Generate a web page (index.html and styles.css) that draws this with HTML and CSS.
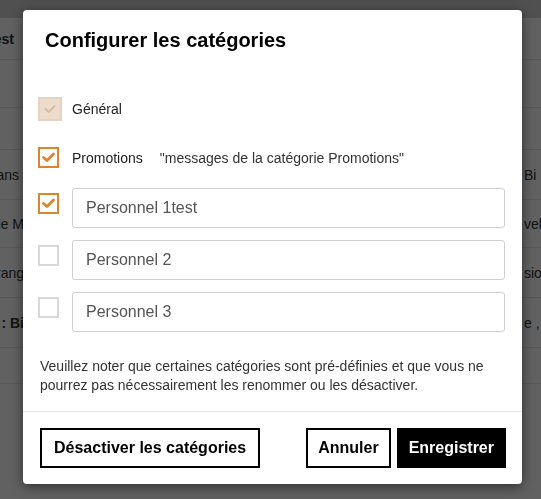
FILE: index.html
```html
<!DOCTYPE html>
<html lang="fr">
<head>
<meta charset="utf-8">
<title>Configurer les catégories</title>
<link rel="stylesheet" href="styles.css">
</head>
<body>
<div class="page">
  <div class="topbar"></div>
  <div class="row row-head"><div class="cell-left cell-head"><b>Test</b></div><div class="cell-mid"></div><div class="cell-right"></div></div>
  <div class="row row-48"><div class="cell-left"></div><div class="cell-mid"></div><div class="cell-right"></div></div>
  <div class="row row-42"><div class="cell-left"></div><div class="cell-mid"></div><div class="cell-right"></div></div>
  <div class="row row-50"><div class="cell-left">Dans</div><div class="cell-mid"></div><div class="cell-right">Bi</div></div>
  <div class="row row-48"><div class="cell-left cell-wide">de M</div><div class="cell-mid"></div><div class="cell-right">vel</div></div>
  <div class="row row-50"><div class="cell-left cell-wide">Orang</div><div class="cell-mid"></div><div class="cell-right">sion</div></div>
  <div class="row row-50"><div class="cell-left cell-wide"><b>: Bi</b></div><div class="cell-mid"></div><div class="cell-right">e , <span class="red">c</span></div></div>
  <div class="row row-36"><div class="cell-left"></div><div class="cell-mid"></div><div class="cell-right"></div></div>
</div>
<div class="overlay"></div>

<div class="modal" role="dialog" aria-labelledby="modal-title">
  <div class="modal-header">
    <h2 id="modal-title" class="modal-title">Configurer les catégories</h2>
  </div>
  <div class="modal-body">
    <div class="cat-row cat-text">
      <span class="check check-disabled"><svg viewBox="0 0 24 24" class="tick"><path d="M6.5 12 L10.5 15.5 L17.5 8.5"/></svg></span>
      <span class="cat-label">Général</span>
    </div>
    <div class="cat-row cat-text">
      <span class="check check-on"><svg viewBox="0 0 17 17" class="tick"><path d="M3.5 8.5 L7 11.5 L13.5 5"/></svg></span>
      <span class="cat-label">Promotions</span>
      <span class="cat-desc">"messages de la catégorie Promotions"</span>
    </div>
    <div class="cat-row cat-input">
      <span class="check check-on"><svg viewBox="0 0 17 17" class="tick"><path d="M3.5 8.5 L7 11.5 L13.5 5"/></svg></span>
      <input class="cat-field" type="text" value="Personnel 1test">
    </div>
    <div class="cat-row cat-input">
      <span class="check check-off"></span>
      <input class="cat-field" type="text" value="Personnel 2">
    </div>
    <div class="cat-row cat-input">
      <span class="check check-off"></span>
      <input class="cat-field" type="text" value="Personnel 3">
    </div>
    <p class="note">Veuillez noter que certaines catégories sont pré-définies et que vous ne pourrez pas nécessairement les renommer ou les désactiver.</p>
  </div>
  <div class="modal-footer">
    <button class="btn btn-outline btn-wide">Désactiver les catégories</button>
    <div class="footer-right">
      <button class="btn btn-outline">Annuler</button>
      <button class="btn btn-primary">Enregistrer</button>
    </div>
  </div>
</div>
</body>
</html>
```

FILE: styles.css
```css
* { box-sizing: border-box; }

html, body {
  margin: 0;
  padding: 0;
  width: 541px;
  height: 499px;
  overflow: hidden;
  font-family: "Liberation Sans", Arial, sans-serif;
}

/* background page */
.page {
  background: #ffffff;
  height: 499px;
  color: #333;
  font-size: 14px;
}
.topbar {
  height: 18px;
  background: #d2d2d2;
}
.row {
  display: flex;
  align-items: center;
  border-bottom: 1px solid #e4e4e4;
}
.row-head { height: 42px; }
.row-48 { height: 48px; }
.row-42 { height: 42px; }
.row-50 { height: 50px; }
.row-36 { height: 36px; }
.cell-left {
  width: 19px;
  display: flex;
  justify-content: flex-end;
  overflow: hidden;
  white-space: nowrap;
}
.cell-head { width: 14px; }
.cell-wide { width: 24px; }
.cell-mid { flex: 1; }
.cell-right {
  width: 17px;
  overflow: hidden;
  white-space: nowrap;
}
.red { color: #c0392b; }

.overlay {
  position: fixed;
  inset: 0;
  background: rgba(0, 0, 0, 0.62);
}

/* modal */
.modal {
  position: absolute;
  left: 23px;
  top: 10px;
  width: 499px;
  background: #fff;
  border-radius: 4px;
  box-shadow: 0 3px 12px rgba(0, 0, 0, 0.5);
  color: #222;
}
.modal-header {
  padding: 18px 22px 0;
}
.modal-title {
  margin: 0;
  font-size: 20px;
  line-height: 24px;
  font-weight: bold;
  color: #000;
}
.modal-body {
  padding: 38px 17px 16px 15px;
  display: flex;
  flex-direction: column;
  gap: 12px;
}
.cat-row {
  display: flex;
}
.cat-text {
  height: 37px;
  align-items: center;
}
.cat-input {
  height: 40px;
  align-items: flex-start;
}
.cat-input .check { margin-top: 5px; }

.check {
  width: 21px;
  height: 21px;
  margin-right: 13px;
  flex: none;
  display: flex;
  align-items: center;
  justify-content: center;
  border: 2px solid #d8d8d8;
  background: #fff;
}
.check-on {
  border-color: #e0832c;
}
.check-on .tick {
  width: 17px;
  height: 17px;
  fill: none;
  stroke: #e0832c;
  stroke-width: 2.8;
  stroke-linecap: round;
  stroke-linejoin: round;
}
.check-disabled {
  width: 24px;
  height: 24px;
  margin-right: 10px;
  background: #ecdccd;
  border-color: #e6d2bf;
}
.check-disabled .tick {
  width: 22px;
  height: 22px;
  fill: none;
  stroke: #dcb999;
  stroke-width: 2.4;
  stroke-linecap: round;
  stroke-linejoin: round;
}
.cat-label {
  font-size: 14px;
  color: #222;
}
.cat-desc {
  margin-left: 17px;
  font-size: 14px;
  color: #333;
}
.cat-field {
  flex: 1;
  height: 40px;
  border: 1px solid #cfcfcf;
  border-radius: 3px;
  padding: 0 13px;
  font-family: "Liberation Sans", Arial, sans-serif;
  font-size: 16px;
  color: #555;
  background: #fff;
  outline: none;
}
.note {
  margin: 13px 0 0 2px;
  font-size: 14px;
  line-height: 19px;
  color: #333;
}

.modal-footer {
  border-top: 1px solid #e6e6e6;
  padding: 16px 16px 16px 17px;
  display: flex;
  justify-content: space-between;
}
.footer-right {
  display: flex;
  gap: 6px;
}
.btn {
  height: 40px;
  padding: 0 10px;
  font-family: "Liberation Sans", Arial, sans-serif;
  font-size: 16px;
  font-weight: bold;
  border: 2px solid #000;
  cursor: pointer;
}
.btn-wide {
  padding: 0 12px;
}
.btn-outline {
  background: #fff;
  color: #000;
}
.btn-primary {
  background: #000;
  color: #fff;
}
```
